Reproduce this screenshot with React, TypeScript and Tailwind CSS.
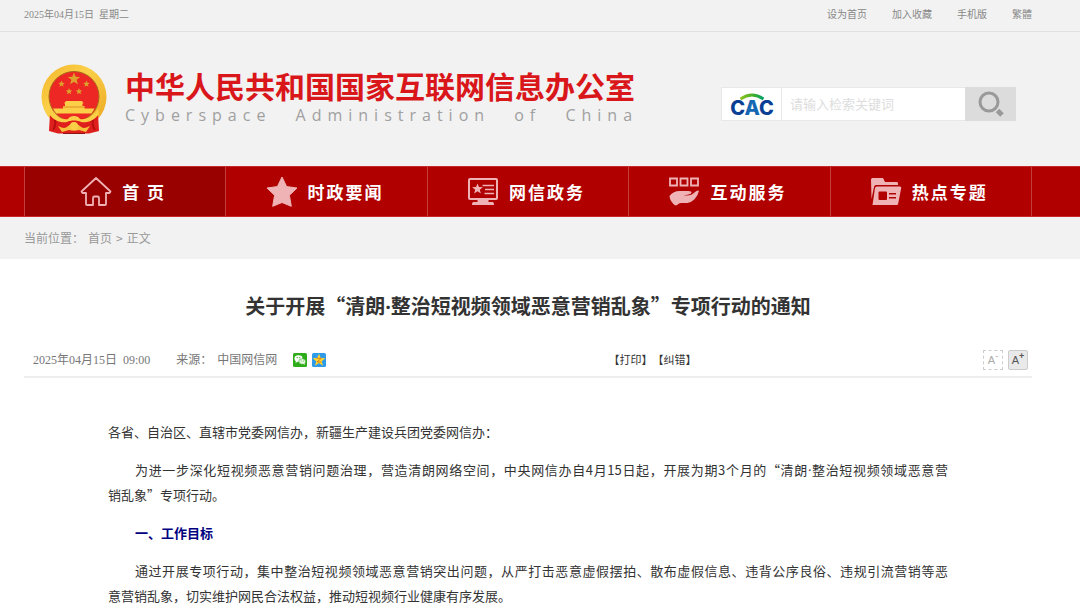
import { ReactNode } from "react";

const STAR =
  "M0 -10 L2.6 -3.4 L9.6 -3.1 L4.1 1.3 L6 8.1 L0 4.2 L-6 8.1 L-4.1 1.3 L-9.6 -3.1 L-2.6 -3.4 Z";

function Emblem() {
  return (
    <svg viewBox="0 0 66 70" className="h-[70px] w-[66px] shrink-0" aria-hidden="true">
      <defs>
        <linearGradient id="gold" x1="0" y1="0" x2="1" y2="1">
          <stop offset="0" stopColor="#f2b52b" />
          <stop offset="0.4" stopColor="#fbd048" />
          <stop offset="1" stopColor="#eba51f" />
        </linearGradient>
      </defs>
      <circle cx="33" cy="33" r="32.5" fill="url(#gold)" />
      <circle cx="33" cy="32.5" r="25" fill="#ed2724" stroke="#a8641a" strokeWidth="1" />
      <g fill="#dda32c">
        <path d={STAR} transform="translate(33 15) scale(.64)" />
        <path d={STAR} transform="translate(20.500 20) scale(.34)" />
        <path d={STAR} transform="translate(45.500 20) scale(.34)" />
        <path d={STAR} transform="translate(28 27.500) scale(.34)" />
        <path d={STAR} transform="translate(38 27.500) scale(.34)" />
      </g>
      <path
        d="M25 37h16l1.500 2.500h-1v2.500h2v2.500h10l-3 5H15l-3-5h10v-2.500h2v-2.500h-1z"
        fill="#fbd048"
      />
      <path d="M22 43h22" stroke="#e08c24" strokeWidth="1" />
      <path d="M9 50l10 4 8 1 6-3 6 3 8-1 10-4 1 17-10 2.500H17L8 67z" fill="#df1f1c" />
      <path d="M13 53c2 5 2 9-1 13M53 53c-2 5-2 9 1 13" stroke="#b80e12" strokeWidth="2" fill="none" />
      <path
        d="M9 45c5 8 13 11 18 10 2-4 10-4 12 0 5 1 13-2 18-10l1 5c-5 7-12 9-18 8-3-2-11-2-14 0-6 1-13-1-18-8z"
        fill="#fbd048"
      />
      <path
        d="M17 62c6 3 8 2 10 0 4-3 8-3 12 0 2 2 4 3 10 0l-4 6-7-2c-3 1-7 1-10 0l-7 2z"
        fill="#f6c13c"
      />
      <circle cx="33" cy="62" r="4" fill="#fbd048" />
      <path d="M22 69.500h22" stroke="#8e1512" strokeWidth="1" />
    </svg>
  );
}

function CacLogo() {
  return (
    <svg viewBox="0 -5 46 32" className="h-8 w-[46px]" role="img" aria-label="CAC">
      <defs>
        <linearGradient id="arc" x1="0" x2="1">
          <stop offset="0" stopColor="#8fc31f" />
          <stop offset="0.6" stopColor="#3aae2c" />
          <stop offset="1" stopColor="#00a26b" />
        </linearGradient>
      </defs>
      <text
        x="23"
        y="22"
        textAnchor="middle"
        className="font-['Inter',sans-serif] text-[20px] font-extrabold"
        fill="#0b3f94"
      >
        C<tspan fill="#1468b3">A</tspan>C
      </text>
      <path d="M11.500 6q11.500-8 23 0" fill="none" stroke="url(#arc)" strokeWidth="3" />
    </svg>
  );
}

const icons: Record<string, ReactNode> = {
  home: (
    <path
      d="M16 2 1.500 15.500l1 1.500H6v11q0 1 1 1h6v-7q0-1.500 1.500-1.500h3q1.500 0 1.500 1.500v7h6q1 0 1-1V17h3.500l1-1.500z"
      fill="none"
      stroke="currentColor"
      strokeWidth="1.8"
      strokeLinejoin="round"
    />
  ),
  star: (
    <path
      d="M16 1l4.600 9.600 10.400 1.400-7.600 7.300 1.900 11L16 26.500 6.700 30.300l1.900-11L1 12l10.400-1.400z"
      fill="currentColor"
      stroke="currentColor"
      strokeLinejoin="round"
    />
  ),
  screen: (
    <>
      <rect x="2" y="3" width="28" height="20" rx="1" fill="none" stroke="currentColor" strokeWidth="2" />
      <path d="M10.500 23h11v3h4q1.500 0 1.500 3H5q0-3 1.500-3h4z" fill="currentColor" />
      <path d={STAR} transform="translate(10.500 13) scale(.56)" fill="currentColor" />
      <path d="M15.500 9.500H27M18 13.500h9M17.500 17.500H27" stroke="currentColor" strokeWidth="1.5" />
    </>
  ),
  hand: (
    <>
      <path
        d="M2 2.500h7v7H2zM12.500 2.500h7v7h-7zM23 2.500h7v7h-7z"
        fill="none"
        stroke="currentColor"
        strokeWidth="1.8"
      />
      <path
        d="M1.500 20q4-5 10-5h9q3 0 3 1.500t-3 2l-5 1q7 0 9-1.500l4-3q1.500-.8 2.500-.3-1 5-4.500 8.500-3 3-7 3.800H13q-2 0-4 2l-1.500.5Q2 26 1.500 20z"
        fill="currentColor"
      />
    </>
  ),
  folder: (
    <>
      <path d="M1 3.500Q1 2 2.500 2H13l2 4h12q1 0 1 1.500V9H6q-1.500 0-2 2L1.500 23z" fill="currentColor" />
      <path
        d="M7 10.500h23q1.500 0 1.200 1.500l-3 15.500q-.3 1.500-1.500 1.500H2.500L5 12q.3-1.500 2-1.500zM9.500 15.500h6.500q1 0 1 1V23q0 1-1 1H9.500q-1 0-1-1v-6.500q0-1 1-1zM19 17v1.500h7V17zM19 21v1.500h7V21z"
        fill="currentColor"
        fillRule="evenodd"
      />
    </>
  ),
};

const topLinks = ["设为首页", "加入收藏", "手机版", "繁體"];

const navItems = [
  { label: "首 页", icon: "home", active: true },
  { label: "时政要闻", icon: "star" },
  { label: "网信政务", icon: "screen" },
  { label: "互动服务", icon: "hand" },
  { label: "热点专题", icon: "folder" },
];

// the CJK fonts draw the middle dot full width
function Dot() {
  return <span className="font-['Open_Sans',sans-serif] leading-none">·</span>;
}

export default function App() {
  return (
    <div
      lang="zh-CN"
      className="min-h-screen bg-white font-['Noto_Sans_CJK_SC','Open_Sans',sans-serif] text-[#333]"
    >
      <div className="bg-[#f2f2f2]">
        <div className="flex h-8 items-center justify-between border-b border-[#e0e0e0] pr-12 pb-0.5 pl-6 font-['Liberation_Serif','Noto_Sans_CJK_SC',serif] text-[10px] text-[#888]">
          <span className="whitespace-pre">2025年04月15日  星期二</span>
          <nav className="flex gap-[25px]">
            {topLinks.map((link) => (
              <a key={link} href="#">
                {link}
              </a>
            ))}
          </nav>
        </div>

        <header className="flex h-[134px] items-center justify-between pr-16 pl-[41px]">
          <a href="#" className="flex items-center gap-[18px]">
            <Emblem />
            <span className="flex flex-col pb-2 whitespace-nowrap">
              <span className="text-[30px] leading-10 font-bold text-[#d9171b]">
                中华人民共和国国家互联网信息办公室
              </span>
              <span className="font-['Open_Sans',sans-serif] text-base leading-5 tracking-[6px] text-[#a0a0a0] [word-spacing:14px]">
                Cyberspace Administration of China
              </span>
            </span>
          </a>

          <form className="mt-2.5 flex h-[34px] border border-[#e8e8e8] bg-white">
            <span className="flex w-[60px] items-center justify-center border-r border-[#e8e8e8]">
              <CacLogo />
            </span>
            <input
              type="text"
              aria-label="请输入检索关键词"
              placeholder="请输入检索关键词"
              className="w-[183px] px-2 text-[13px] outline-none placeholder:text-[#ddd]"
            />
            <button
              type="submit"
              aria-label="搜索"
              className="-my-px -mr-px flex w-[51px] items-center justify-center bg-[#dcdcdc]"
            >
              <svg viewBox="0 0 28 28" className="size-7" fill="none" stroke="#999" aria-hidden="true">
                <circle cx="12" cy="12" r="9" strokeWidth="3" />
                <path d="M20.500 20.500l4.500 4.500" strokeWidth="5" />
              </svg>
            </button>
          </form>
        </header>
      </div>

      <nav className="border-y border-[#c62a2a] bg-[#b10000] pr-12 pl-6">
        <ul className="grid grid-cols-5 border-r border-[#c43c3c]">
          {navItems.map((item) => (
            <li key={item.label}>
              <a
                href="#"
                className={`flex h-[49px] items-center justify-center gap-2.5 border-l border-[#c43c3c] pr-1 text-[17px] font-bold tracking-[2px] text-white ${
                  item.active ? "bg-[#990000]" : ""
                }`}
              >
                <svg viewBox="0 0 32 32" className="size-8 text-[#efb3b6]" aria-hidden="true">
                  {icons[item.icon]}
                </svg>
                {item.label}
              </a>
            </li>
          ))}
        </ul>
      </nav>

      <div className="flex h-[42px] items-center gap-1 bg-[#f2f2f2] pl-6 text-xs text-[#999]">
        <span>当前位置：</span>
        <a href="#">首页</a>
        <span>&gt;</span>
        <a href="#">正文</a>
      </div>

      <main className="pr-12 pl-6">
        <h1 className="pt-[31px] text-center text-xl leading-8 font-bold">
          关于开展“清朗
          <Dot />
          整治短视频领域恶意营销乱象”专项行动的通知
        </h1>

        <div className="mt-5 grid h-9 grid-cols-2 items-center border-b-2 border-[#eee] pt-0.5 pr-1 pl-[9px] font-['Liberation_Serif','Noto_Sans_CJK_SC',serif] text-xs text-[#777]">
          <div className="flex items-center">
            <span className="whitespace-pre">2025年04月15日  09:00</span>
            <span className="ml-[26px]">来源：</span>
            <span className="ml-[5px]">中国网信网</span>
            <a href="#" aria-label="微信" className="ml-4">
              <svg viewBox="0 0 14 14" className="size-3.5">
                <rect width="14" height="14" rx="1.5" fill="#2fac19" />
                <ellipse cx="5.5" cy="5.5" rx="4" ry="3.2" fill="#fff" />
                <path d="M3 7.500l-.5 2.500 2.500-1.500z" fill="#fff" />
                <ellipse cx="9.2" cy="8.5" rx="3.4" ry="2.8" fill="#eaf7e6" stroke="#2fac19" strokeWidth=".6" />
                <path d="M10 10.500l1.500 1.500.3-2.500z" fill="#eaf7e6" />
                <g fill="#2fac19">
                  <circle cx="4.2" cy="4.7" r=".6" />
                  <circle cx="6.8" cy="4.7" r=".6" />
                  <circle cx="8.1" cy="8" r=".5" />
                  <circle cx="10.3" cy="8" r=".5" />
                </g>
              </svg>
            </a>
            <a href="#" aria-label="QQ空间" className="ml-[5px]">
              <svg viewBox="0 0 14 14" className="size-3.5">
                <rect width="14" height="14" rx="1.5" fill="#2f9be8" />
                <path d={STAR} transform="translate(7 7.300) scale(.66)" fill="#ffd52e" />
                <path d="M4.700 5.300h4.600L5 9h4.500" fill="none" stroke="#d9811b" strokeWidth="1" />
              </svg>
            </a>
          </div>
          <div className="flex items-center justify-between pl-[78px]">
            <div className="text-[11px] whitespace-nowrap text-[#333]">
              <button type="button">【打印】</button>
              <button type="button">【纠错】</button>
            </div>
            <div className="flex gap-[5px] font-['Liberation_Sans',sans-serif]">
              <button
                type="button"
                aria-label="缩小字号"
                className="flex size-5 items-center justify-center border border-dashed border-[#ccc] text-[11px] text-[#aaa]"
              >
                A<sup className="text-[9px]">-</sup>
              </button>
              <button
                type="button"
                aria-label="放大字号"
                className="flex size-5 items-center justify-center rounded-xs border border-[#ccc] bg-[#e9e9e9] text-[11px] text-[#555]"
              >
                A<sup className="text-[9px] font-bold">+</sup>
              </button>
            </div>
          </div>
        </div>

        <article className="flex flex-col gap-[13px] px-[84px] pt-[41px] text-justify text-[13px] leading-[25px]">
          <p>各省、自治区、直辖市党委网信办，新疆生产建设兵团党委网信办：</p>
          <p className="indent-[27px]">
            为进一步深化短视频恶意营销问题治理，营造清朗网络空间，中央网信办自4月15日起，开展为期3个月的“清朗
            <Dot />
            整治短视频领域恶意营
            <span className="whitespace-nowrap">销乱象”专项行动。</span>
          </p>
          <h2 className="indent-[27px] font-bold text-[#000080]">一、工作目标</h2>
          <p className="indent-[27px]">
            通过开展专项行动，集中整治短视频领域恶意营销突出问题，从严打击恶意虚假摆拍、散布虚假信息、违背公序良俗、违规引流营销等恶
            <span className="whitespace-nowrap">意营销乱象，切实维护网民合法权益，推动短视频行业健康有序发展。</span>
          </p>
        </article>
      </main>
    </div>
  );
}
